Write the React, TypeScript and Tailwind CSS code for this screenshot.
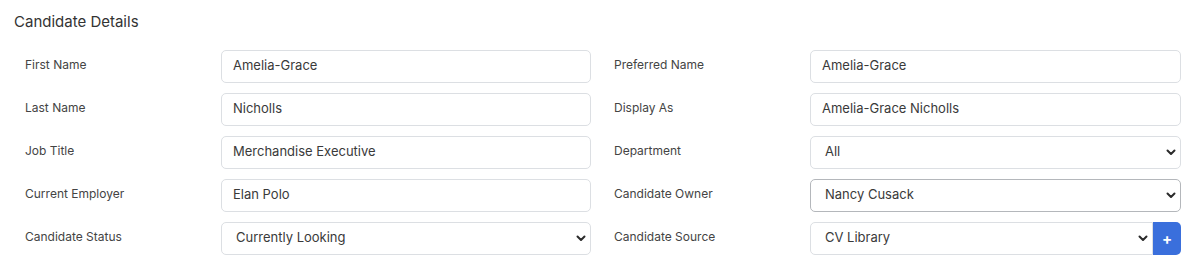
import React from "react";

const Chevron = () => (
  <svg width="10" height="7" viewBox="0 0 10 7" className="pointer-events-none">
    <path d="M1.5 1.5 L5 5 L8.5 1.5" fill="none" stroke="#2b2b2b" strokeWidth="2" strokeLinecap="round" strokeLinejoin="round" />
  </svg>
);

const TextBox = ({ value }: { value: string }) => (
  <div className="h-[33px] w-full border border-[#dcdfe3] rounded-[5px] flex items-center pl-[11px] text-[13px] text-[#3a3a3a]">
    {value}
  </div>
);

const SelectBox = ({ value, dark, addon }: { value: string; dark?: boolean; addon?: boolean }) => (
  <div className="flex w-full h-[33px]">
    <div
      className={
        "flex-1 flex items-center justify-between pl-[14px] pr-[4px] text-[13px] text-[#3a3a3a] border " +
        (dark ? "border-[#b4b7bb] " : "border-[#dcdfe3] ") +
        (addon ? "rounded-l-[5px]" : "rounded-[5px]")
      }
    >
      <span>{value}</span>
      <Chevron />
    </div>
    {addon && (
      <div className="w-[28px] h-full bg-[#3a6fdc] rounded-r-[5px] flex items-center justify-center text-white text-[15px] font-bold leading-none">
        +
      </div>
    )}
  </div>
);

type Field = { label: string; value: string; kind: "text" | "select"; dark?: boolean; addon?: boolean };

const left: Field[] = [
  { label: "First Name", value: "Amelia-Grace", kind: "text" },
  { label: "Last Name", value: "Nicholls", kind: "text" },
  { label: "Job Title", value: "Merchandise Executive", kind: "text" },
  { label: "Current Employer", value: "Elan Polo", kind: "text" },
  { label: "Candidate Status", value: "Currently Looking", kind: "select" },
];
const right: Field[] = [
  { label: "Preferred Name", value: "Amelia-Grace", kind: "text" },
  { label: "Display As", value: "Amelia-Grace Nicholls", kind: "text" },
  { label: "Department", value: "All", kind: "select" },
  { label: "Candidate Owner", value: "Nancy Cusack", kind: "select", dark: true },
  { label: "Candidate Source", value: "CV Library", kind: "select", addon: true },
];

const Row = ({ f }: { f: Field }) => (
  <div className="flex items-center">
    <div className="w-[196px] shrink-0 text-[12px] text-[#444] -mt-[3px]">{f.label}</div>
    <div className="flex-1">
      {f.kind === "text" ? <TextBox value={f.value} /> : <SelectBox value={f.value} dark={f.dark} addon={f.addon} />}
    </div>
  </div>
);

export default function App() {
  return (
    <div className="w-[1198px] h-[274px] bg-white" style={{ fontFamily: "Inter, 'Noto Sans', sans-serif" }}>
      <div className="pl-[14px] pt-[11px] text-[15px] text-[#333]">Candidate Details</div>
      <div className="flex pl-[25px] pt-[16px]">
        <div className="w-[566px] flex flex-col gap-[10px]">
          {left.map((f) => (
            <Row key={f.label} f={f} />
          ))}
        </div>
        <div className="w-[23px]" />
        <div className="w-[567px] flex flex-col gap-[10px]">
          {right.map((f) => (
            <Row key={f.label} f={f} />
          ))}
        </div>
      </div>
    </div>
  );
}
